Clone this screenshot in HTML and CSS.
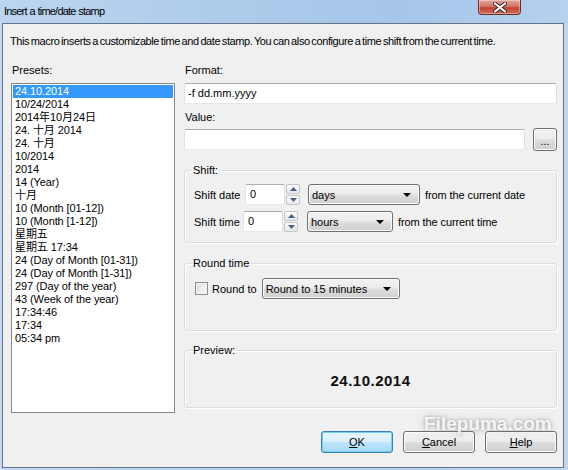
FILE: index.html
```html
<!DOCTYPE html>
<html>
<head>
<meta charset="utf-8">
<title>Insert a time/date stamp</title>
<link rel="stylesheet" href="styles.css">
</head>
<body>
<div class="frame">
  <div class="titlebar">
    <span class="title">Insert a time/date stamp</span>
    <div class="close">
      <svg width="14" height="11" viewBox="0 0 14 11"><path d="M2 1.5 L12 9.5 M12 1.5 L2 9.5" stroke="#3b2222" stroke-width="4" stroke-linecap="round"/><path d="M2 1.5 L12 9.5 M12 1.5 L2 9.5" stroke="#ffffff" stroke-width="2.2" stroke-linecap="round"/></svg>
    </div>
  </div>
  <div class="client">
    <p class="intro">This macro inserts a customizable time and date stamp. You can also configure a time shift from the current time.</p>
    <div class="main">
      <div class="left">
        <div class="lbl">Presets:</div>
        <ul class="list">
          <li class="sel">24.10.2014</li>
          <li>10/24/2014</li>
          <li>2014年10月24日</li>
          <li>24. 十月 2014</li>
          <li>24. 十月</li>
          <li>10/2014</li>
          <li>2014</li>
          <li>14 (Year)</li>
          <li>十月</li>
          <li>10 (Month [01-12])</li>
          <li>10 (Month [1-12])</li>
          <li>星期五</li>
          <li>星期五 17:34</li>
          <li>24 (Day of Month [01-31])</li>
          <li>24 (Day of Month [1-31])</li>
          <li>297 (Day of the year)</li>
          <li>43 (Week of the year)</li>
          <li>17:34:46</li>
          <li>17:34</li>
          <li>05:34 pm</li>
        </ul>
      </div>
      <div class="right">
        <div class="lbl">Format:</div>
        <div class="input format">-f dd.mm.yyyy</div>
        <div class="lbl lbl-value">Value:</div>
        <div class="value-row">
          <div class="input value"></div>
          <div class="btn dots">...</div>
        </div>
        <fieldset class="group shift">
          <legend>Shift:</legend>
          <div class="row">
            <span class="rlabel date-l">Shift date</span>
            <div class="input num">0</div>
            <div class="spin">
              <span class="sb"><svg width="7" height="4" viewBox="0 0 7 4"><path d="M0 4 L3.5 0 L7 4Z" fill="#4a5f86"/></svg></span>
              <span class="sb"><svg width="7" height="4" viewBox="0 0 7 4"><path d="M0 0 L3.5 4 L7 0Z" fill="#4a5f86"/></svg></span>
            </div>
            <div class="combo days"><span>days</span><svg width="8" height="4" viewBox="0 0 8 4"><path d="M0 0 L8 0 L4 4Z" fill="#000"/></svg></div>
            <span class="after">from the current date</span>
          </div>
          <div class="row row2">
            <span class="rlabel time-l">Shift time</span>
            <div class="input num">0</div>
            <div class="spin">
              <span class="sb"><svg width="7" height="4" viewBox="0 0 7 4"><path d="M0 4 L3.5 0 L7 4Z" fill="#4a5f86"/></svg></span>
              <span class="sb"><svg width="7" height="4" viewBox="0 0 7 4"><path d="M0 0 L3.5 4 L7 0Z" fill="#4a5f86"/></svg></span>
            </div>
            <div class="combo hours"><span>hours</span><svg width="8" height="4" viewBox="0 0 8 4"><path d="M0 0 L8 0 L4 4Z" fill="#000"/></svg></div>
            <span class="after">from the current time</span>
          </div>
        </fieldset>
        <fieldset class="group round">
          <legend>Round time</legend>
          <div class="row">
            <span class="check"></span>
            <span class="check-label">Round to</span>
            <div class="combo roundsel"><span>Round to 15 minutes</span><svg width="8" height="4" viewBox="0 0 8 4"><path d="M0 0 L8 0 L4 4Z" fill="#000"/></svg></div>
          </div>
        </fieldset>
        <fieldset class="group preview">
          <legend>Preview:</legend>
          <div class="preview-value">24.10.2014</div>
        </fieldset>
      </div>
    </div>
    <div class="buttons">
      <div class="btn push default"><span><u>O</u>K</span></div>
      <div class="btn push"><span><u>C</u>ancel</span></div>
      <div class="btn push"><span><u>H</u>elp</span></div>
    </div>
  </div>
  <div class="watermark">Filepuma.com</div>
</div>
</body>
</html>
```
FILE: styles.css
```css
* { box-sizing: border-box; }
html, body { margin: 0; padding: 0; }
body {
  width: 568px;
  height: 470px;
  overflow: hidden;
  font-family: "Liberation Sans", Arial, "Noto Sans CJK SC", sans-serif;
  font-size: 11px;
  color: #000;
  background: #bcd4ee;
}
.frame {
  position: relative;
  width: 568px;
  height: 470px;
  display: flex;
  flex-direction: column;
  background: linear-gradient(90deg, #c6dbf1 0%, #b7d0ec 50%, #bed6ef 100%);
}
.titlebar {
  height: 23px;
  flex: none;
  display: flex;
  justify-content: space-between;
  align-items: flex-start;
  background: linear-gradient(90deg, #bcd5ef 0%, #aecbeb 40%, #a6c5e9 70%, #b6d1ee 100%);
}
.title {
  font-family: "Liberation Sans", Arial, sans-serif;
  font-size: 11px;
  letter-spacing: -0.8px;
  word-spacing: 0.5px;
  line-height: 14px;
  margin: 4px 0 0 4px;
  color: #000;
}
.close {
  width: 43px;
  height: 15px;
  margin-right: 47px;
  border: 1px solid #6e2a26;
  border-top: none;
  border-radius: 0 0 4px 4px;
  background: linear-gradient(#e3a89e 0%, #d3766a 45%, #c24638 55%, #cf6a55 100%);
  box-shadow: inset 0 0 0 1px rgba(255, 220, 210, 0.5);
  display: flex;
  justify-content: center;
  align-items: center;
}
.client {
  margin-left: 2px;
  width: 562px;
  height: 445px;
  flex: none;
  border: 1px solid #62738a;
  background: #f0f0f0;
  padding: 11px 6px 0 8px;
  display: flex;
  flex-direction: column;
}
.intro {
  margin: 0 0 0 -1px;
  line-height: 13px;
  height: 13px;
  letter-spacing: -0.4px;
  word-spacing: -1px;
  white-space: nowrap;
}
.main {
  margin-top: 15px;
  display: flex;
  gap: 9px;
  align-items: flex-start;
}
.left {
  width: 164px;
  flex: none;
  display: flex;
  flex-direction: column;
}
.lbl {
  line-height: 13px;
  height: 13px;
  margin: 1px 0 6px 1px;
  white-space: nowrap;
}
.list {
  list-style: none;
  margin: 0;
  width: 164px;
  height: 330px;
  border: 1px solid #828790;
  background: #fff;
  padding: 1px;
  overflow: hidden;
}
.list li {
  height: 13px;
  line-height: 13px;
  padding-left: 2px;
  white-space: nowrap;
  letter-spacing: -0.1px;
  font-family: "Liberation Sans", Arial, "Noto Sans CJK SC", sans-serif;
}
.list li.sel {
  background: #3399ff;
  color: #fff;
}
.right {
  width: 373px;
  flex: none;
  display: flex;
  flex-direction: column;
}
.input {
  height: 21px;
  background: #fff;
  border: 1px solid;
  border-color: #abadb3 #dbdfe6 #e3e9ef #e2e3ea;
  border-radius: 2px;
  padding: 0 3px;
  line-height: 19px;
  white-space: nowrap;
}
.format { width: 373px; }
.lbl-value { margin-top: 7px; margin-bottom: 4px; }
.value-row {
  display: flex;
  align-items: center;
  height: 23px;
}
.value { width: 341px; }
.btn {
  border: 1px solid #707070;
  border-radius: 3px;
  background: linear-gradient(#f2f2f2 0%, #ebebeb 48%, #dddddd 52%, #cfcfcf 100%);
  box-shadow: inset 0 0 0 1px #fcfcfc;
  display: flex;
  justify-content: center;
  align-items: center;
  white-space: nowrap;
}
.dots {
  width: 24px;
  height: 23px;
  margin-left: 8px;
  line-height: 12px;
  padding-top: 3px;
}
.group {
  margin: 13px 0 0 0;
  min-width: 0;
  border: 1px solid #d5dfe5;
  border-radius: 3px;
  box-shadow: inset 1px 1px 0 #fff, 1px 1px 0 #fff;
  padding: 7px 6px 10px 9px;
}
.group legend {
  padding: 0 1px;
  margin-left: -2px;
  line-height: 13px;
  height: 13px;
  font-size: 11px;
}
.row {
  display: flex;
  align-items: center;
  height: 21px;
}
.row2 { margin-top: 6px; }
.rlabel { white-space: nowrap; }
.date-l { width: 51px; }
.time-l { width: 49px; }
.num {
  width: 40px;
  padding-left: 4px;
}
.spin {
  width: 14px;
  height: 21px;
  margin-left: 1px;
  display: flex;
  flex-direction: column;
  justify-content: space-between;
}
.sb {
  height: 10px;
  border: 1px solid #c4c6cb;
  border-radius: 2px;
  background: linear-gradient(#fbfbfb, #e6e8ec);
  display: flex;
  justify-content: center;
  align-items: center;
}
.combo {
  height: 21px;
  border: 1px solid #707070;
  border-radius: 3px;
  background: linear-gradient(#f2f2f2 0%, #ebebeb 48%, #dddddd 52%, #cfcfcf 100%);
  box-shadow: inset 0 0 0 1px #fcfcfc;
  display: flex;
  justify-content: space-between;
  align-items: center;
  padding: 0 8px 0 3px;
  white-space: nowrap;
}
.days { width: 112px; margin-left: 8px; }
.hours { width: 86px; margin-left: 9px; }
.after { margin-left: 5px; white-space: nowrap; letter-spacing: -0.1px; }
.round { margin-top: 14px; padding-top: 8px; padding-bottom: 31px; }
.check {
  width: 13px;
  height: 13px;
  margin-left: 1px;
  border: 1px solid #8e8f8f;
  background: linear-gradient(135deg, #dcdcdc, #fbfbfb);
  box-shadow: inset 0 0 0 1px #f4f4f4;
}
.check-label { margin-left: 4px; }
.roundsel { width: 138px; margin-left: 5px; }
.preview { margin-top: 13px; padding-top: 15px; padding-bottom: 17px; }
.preview-value {
  text-align: center;
  font-weight: bold;
  font-size: 15px;
  letter-spacing: 0.5px;
  line-height: 18px;
  height: 18px;
  color: #111;
  margin-left: -9px;
  margin-right: -6px;
}
.buttons {
  margin-top: 18px;
  display: flex;
  justify-content: flex-end;
  gap: 10px;
}
.push {
  width: 72px;
  height: 22px;
}
.default {
  border-color: #3c7fb1;
  background: linear-gradient(#eaf6fd 0%, #d9f0fc 48%, #bee6fd 52%, #a7d9f5 100%);
  box-shadow: inset 0 0 0 1px #72cff5;
}
.watermark {
  position: absolute;
  left: 424px;
  top: 414px;
  font-family: "Liberation Sans", Arial, sans-serif;
  font-weight: bold;
  font-size: 19px;
  line-height: 20px;
  color: rgba(255, 255, 255, 0.9);
  text-shadow: 0 0 3px rgba(90, 90, 90, 0.5), 0 0 7px rgba(120, 120, 120, 0.35);
  pointer-events: none;
}
```
